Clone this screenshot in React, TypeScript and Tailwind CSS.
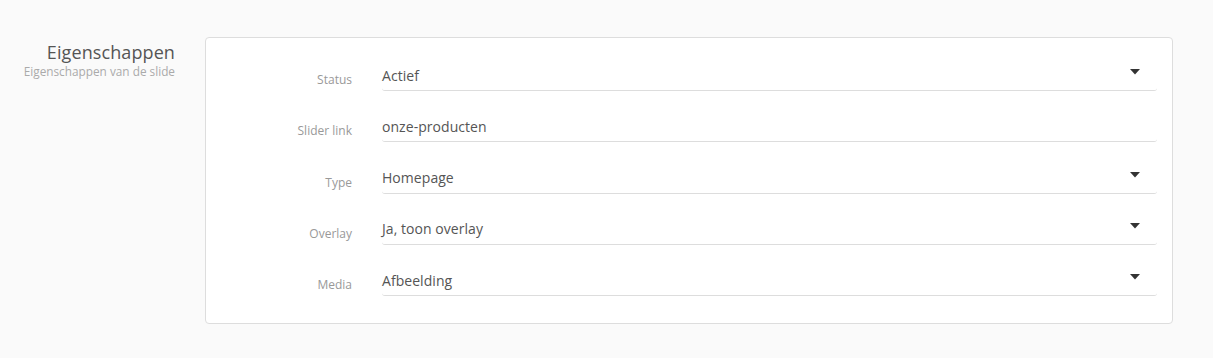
import React from "react";

const rows = [
  { label: "Status", value: "Actief", select: true },
  { label: "Slider link", value: "onze-producten", select: false },
  { label: "Type", value: "Homepage", select: true },
  { label: "Overlay", value: "Ja, toon overlay", select: true },
  { label: "Media", value: "Afbeelding", select: true },
];

export default function App() {
  return (
    <div
      className="w-[1213px] h-[358px] bg-[#fafafa] pt-[37px] flex"
      style={{ fontFamily: '"Open Sans", "Noto Sans", sans-serif' }}
    >
      <div className="w-[175px] shrink-0 text-right pt-[5px]">
        <div className="text-[18px] leading-[20px] text-[#555] tracking-[0.1px]">Eigenschappen</div>
        <div className="text-[11.8px] leading-[17px] text-[#aaa] mt-[1px]">Eigenschappen van de slide</div>
      </div>
      <div className="ml-[30px] w-[968px] h-[287px] bg-white border border-[#dddddd] rounded-[4px] pt-[19px] pr-[15px]">
        {rows.map((r, i) => (
          <div key={i} className="flex mb-[17.25px]">
            <div className="w-[146px] shrink-0 text-right text-[12px] leading-[17px] text-[#999] pt-[14px]">
              {r.label}
            </div>
            <div className="ml-[30px] flex-1 h-[34px] border-b border-[#dddddd] rounded-[3px] flex items-center text-[14px] text-[#555] relative">
              <span className="mt-[3px] tracking-[0.05px]">{r.value}</span>
              {r.select && (
                <svg
                  className="absolute right-[17px] top-[12px]"
                  width="10"
                  height="6"
                  viewBox="0 0 10 6"
                >
                  <path d="M0 0 H10 L5 5.5 Z" fill="#333" />
                </svg>
              )}
            </div>
          </div>
        ))}
      </div>
    </div>
  );
}
